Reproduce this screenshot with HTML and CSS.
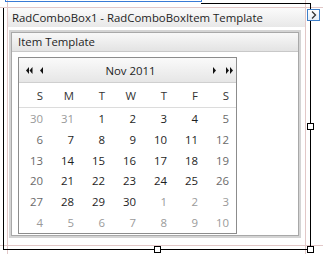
FILE: index.html
```html
<!DOCTYPE html>
<html lang="en">
    <head>
        <meta charset="UTF-8">
        <title>RadComboBox1 - RadComboBoxItem Template</title>
        <link rel="stylesheet" href="styles.css">
    </head>
    <body>
        <div class="stage">
            <div class="control">
                <div class="control-title">RadComboBox1 - RadComboBoxItem Template</div>
                <div class="template-panel">
                    <div class="panel-head">Item Template</div>
                    <div class="panel-body">
                        <div class="calendar">
                            <div class="cal-nav">
                                <svg class="nav-left" width="18" height="7" viewBox="0 0 18 7">
                                    <polygon points="0,3.5 3,0 3,7" />
                                    <polygon points="3.5,3.5 6.5,0 6.5,7" />
                                    <polygon points="14,3.5 17,0 17,7" />
                                </svg>
                                <span class="cal-title">Nov 2011</span>
                                <svg class="nav-right" width="22" height="7" viewBox="0 0 22 7">
                                    <polygon points="0,0 3,3.5 0,7" />
                                    <polygon points="13,0 16,3.5 13,7" />
                                    <polygon points="17,0 20,3.5 17,7" />
                                </svg>
                            </div>
                            <table class="cal-grid">
                                <thead>
                                    <tr><th>S</th><th>M</th><th>T</th><th>W</th><th>T</th><th>F</th><th>S</th></tr>
                                </thead>
                                <tbody>
                                    <tr><td class="other">30</td><td class="other">31</td><td>1</td><td>2</td><td>3</td><td>4</td><td class="weekend">5</td></tr>
                                    <tr><td class="weekend">6</td><td>7</td><td>8</td><td>9</td><td>10</td><td>11</td><td class="weekend">12</td></tr>
                                    <tr><td class="weekend">13</td><td>14</td><td>15</td><td>16</td><td>17</td><td>18</td><td class="weekend">19</td></tr>
                                    <tr><td class="weekend">20</td><td>21</td><td>22</td><td>23</td><td>24</td><td>25</td><td class="weekend">26</td></tr>
                                    <tr><td class="weekend">27</td><td>28</td><td>29</td><td>30</td><td class="other">1</td><td class="other">2</td><td class="other">3</td></tr>
                                    <tr><td class="other">4</td><td class="other">5</td><td class="other">6</td><td class="other">7</td><td class="other">8</td><td class="other">9</td><td class="other">10</td></tr>
                                </tbody>
                            </table>
                        </div>
                    </div>
                </div>
            </div>

            <!-- designer adorners -->
            <div class="guide guide-h guide-top"></div>
            <div class="guide guide-h guide-bottom"></div>
            <div class="guide guide-v guide-left"></div>
            <div class="guide guide-v guide-right"></div>

            <div class="frame frame-left"></div>
            <div class="frame frame-top"></div>
            <div class="frame frame-right"></div>
            <div class="frame frame-bottom"></div>

            <div class="parent-box"></div>

            <div class="handle handle-bottom"></div>
            <div class="handle handle-right"></div>
            <div class="handle handle-corner"></div>

            <div class="smart-tag">
                <svg width="6" height="8" viewBox="0 0 6 8">
                    <polyline points="1,0.5 4.5,4 1,7.5" fill="none" stroke="#333" stroke-width="1.3" />
                </svg>
            </div>
        </div>
    </body>
</html>
```

FILE: styles.css
```css
html, body {
    margin: 0;
    padding: 0;
    background: #ffffff;
}

body {
    font-family: "Open Sans", "Noto Sans", sans-serif;
    font-size: 11.4px;
    color: #1e1e1e;
}

.stage {
    position: relative;
    width: 323px;
    height: 254px;
    overflow: hidden;
}

/* the control itself */
.control {
    margin: 8px 0 0 8px;
    width: 297px;
    height: 237px;
    display: flex;
    flex-direction: column;
}

.control-title {
    height: 19px;
    line-height: 19px;
    padding-left: 4px;
    background: linear-gradient(#fbfbfb, #e8e8e8);
    white-space: nowrap;
}

.template-panel {
    margin: 5px 0 0 3px;
    width: 286px;
    height: 202px;
    border: 1px solid #a8a8a8;
    box-shadow: 0 0 0 2px #d4d4d4;
    display: flex;
    flex-direction: column;
}

.panel-head {
    height: 18px;
    line-height: 18px;
    padding-left: 6px;
    background: linear-gradient(#f8f8f8, #e3e3e3);
    border-bottom: 1px solid #c8c8c8;
}

.panel-body {
    padding: 5px 0 0 6px;
}

/* calendar */
.calendar {
    width: 217px;
    height: 175px;
    border: 1px solid #8c8c8c;
    display: flex;
    flex-direction: column;
}

.cal-nav {
    height: 24px;
    display: flex;
    align-items: center;
    padding-left: 7px;
    background: linear-gradient(#fafafa, #e6e6e6);
    border-bottom: 1px solid #cfcfcf;
}

.cal-nav svg {
    fill: #111;
}

.cal-title {
    flex: 1;
    text-align: center;
    padding-left: 4px;
}

.nav-right {
    margin-right: 1px;
}

.cal-grid {
    flex: 1;
    width: 100%;
    border-collapse: collapse;
    table-layout: fixed;
}

.cal-grid th {
    height: 24px;
    font-weight: normal;
    color: #333;
    text-align: right;
    padding: 0 7px 0 0;
    border-bottom: 1px solid #dcdcdc;
}

.cal-grid td {
    text-align: right;
    padding: 0 7px 0 0;
    color: #1e1e1e;
}

.cal-grid td.weekend {
    color: #6a6a6a;
}

.cal-grid td.other {
    color: #9a9a9a;
}

/* designer adorners */
.guide {
    position: absolute;
    background: #e2c8c8;
}

.guide-h {
    left: 0;
    width: 323px;
    height: 1px;
}

.guide-v {
    top: 0;
    width: 1px;
    height: 254px;
}

.guide-top { top: 7px; }
.guide-bottom { top: 245px; }
.guide-left { left: 7px; }
.guide-right { left: 305px; }

.frame {
    position: absolute;
    background: #000;
}

.frame-left { left: 3px; top: 8px; width: 1px; height: 242px; }
.frame-top { left: 201px; top: 3px; width: 110px; height: 1px; }
.frame-right { left: 310px; top: 3px; width: 1px; height: 247px; }
.frame-bottom { left: 3px; top: 249px; width: 308px; height: 1px; }

.parent-box {
    position: absolute;
    left: 5px;
    top: -4px;
    width: 195px;
    height: 4px;
    border: 1px solid #3a7bd5;
}

.handle {
    position: absolute;
    width: 5px;
    height: 5px;
    background: #fff;
    border: 1px solid #000;
}

.handle-bottom { left: 154px; top: 246px; }
.handle-right { left: 307px; top: 123px; }
.handle-corner { left: 307px; top: 246px; }

.smart-tag {
    position: absolute;
    left: 307px;
    top: 9px;
    width: 11px;
    height: 10px;
    border: 1px solid #3f7fc8;
    background: linear-gradient(#ffffff, #e6eef8);
    display: flex;
    align-items: center;
    justify-content: center;
}
```
